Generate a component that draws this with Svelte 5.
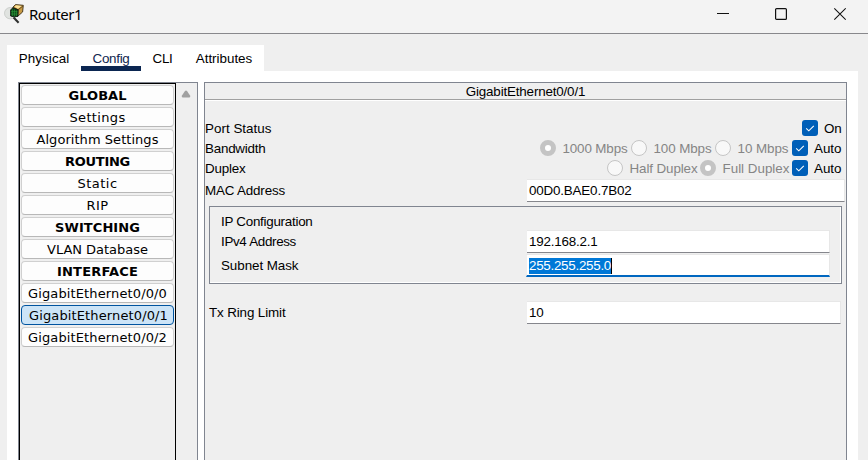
<script>
  const tabs = [
    { name: 'Physical', width: 74, text: 50.5 },
    { name: 'Config', width: 60, text: 37 },
    { name: 'CLI', width: 43, text: 20 },
    { name: 'Attributes', width: 80, text: 56.5 },
  ];
  const items = [
    { name: 'GLOBAL', text: 58, heading: true },
    { name: 'Settings', text: 56 },
    { name: 'Algorithm Settings', text: 122 },
    { name: 'ROUTING', text: 65, heading: true },
    { name: 'Static', text: 40 },
    { name: 'RIP', text: 22 },
    { name: 'SWITCHING', text: 85, heading: true },
    { name: 'VLAN Database', text: 101 },
    { name: 'INTERFACE', text: 81, heading: true },
    { name: 'GigabitEthernet0/0/0', text: 139 },
    { name: 'GigabitEthernet0/0/1', text: 139, selected: true },
    { name: 'GigabitEthernet0/0/2', text: 139 },
  ];
  const bandwidth = [
    { name: '1000 Mbps', text: 65, width: 75, on: true },
    { name: '100 Mbps', text: 58, width: 68 },
    { name: '10 Mbps', text: 51, width: 61 },
  ];
  const duplex = [
    { name: 'Half Duplex', text: 68, width: 77 },
    { name: 'Full Duplex', text: 67, width: 76, on: true },
  ];

  // Spreads the letters of a label so that it occupies the given width.
  function fit(node, width) {
    const range = document.createRange();
    range.selectNodeContents(node);
    const natural = range.getBoundingClientRect().width;
    node.style.letterSpacing = (width - natural) / node.textContent.length + 'px';
  }
</script>

{#snippet check()}
  <svg class="check" width="16" height="16" viewBox="0 0 16 16">
    <rect width="16" height="16" rx="3" fill="#005fb8" />
    <path d="M4.2 8.3 6.8 10.8 11.8 5.8" fill="none" stroke="#fff" stroke-width="1.1" />
  </svg>
{/snippet}

{#snippet radio(option)}
  <span class="radio" class:on={option.on}></span>
  <span class="choice" style:width="{option.width}px"><span use:fit={option.text}>{option.name}</span></span>
{/snippet}

<div class="window">
  <header>
    <svg class="logo" width="22" height="22" viewBox="0 0 22 22">
      <path d="M8.5 3.5 11.5 0.6 19.3 1.3 18.6 8 13.5 12.5Z" fill="#c99a42" stroke="#3c3018" stroke-width="0.9" />
      <path d="M10.4 2.7 12.2 1.3 17.8 1.9 14 4.8Z" fill="#fbe29a" />
      <path d="M9 3.2 14 5.8 19 2" fill="none" stroke="#5c431a" stroke-width="0.9" />
      <circle cx="6.2" cy="9.2" r="5.7" fill="#e0e3e0" stroke="#c0c3c0" stroke-width="0.7" />
      <path d="M6.6 6 8.8 3.8 14.2 5.8 14 12.2 10.5 13 6.6 12Z" fill="#0a3f14" stroke="#111b12" stroke-width="0.9" />
      <path d="M8.4 5.5v6.5M10.4 5.5v7M12.4 6.5v5.5M7 7.7h6.5M7 10h6.5" stroke="#2a9a39" stroke-width="0.7" />
      <path d="M9.6 13.6 14.6 18.8" stroke="#2e302e" stroke-width="2.1" />
    </svg>
    <h1><span use:fit={53}>Router1</span></h1>
    <div class="controls">
      <svg width="13" height="14" viewBox="0 0 13 14"><path d="M0 6.5H12" stroke="#111" /></svg>
      <svg width="13" height="14" viewBox="0 0 13 14"><rect x="0.6" y="1.6" width="10.8" height="10.8" rx="1" fill="none" stroke="#111" stroke-width="1.2" /></svg>
      <svg width="13" height="14" viewBox="0 0 13 14"><path d="M1.3 1.3 12.7 12.7M12.7 1.3 1.3 12.7" stroke="#111" stroke-width="1.1" /></svg>
    </div>
  </header>

  <nav>
    {#each tabs as tab}
      <div class="tab" class:active={tab.name === 'Config'} style:width="{tab.width}px"><span use:fit={tab.text}>{tab.name}</span></div>
    {/each}
  </nav>

  <main>
    <aside>
      <div class="list">
        {#each items as item}
          <button class:heading={item.heading} class:selected={item.selected}><span use:fit={item.text}>{item.name}</span></button>
        {/each}
      </div>
      <div class="scrollbar">
        <svg width="10" height="8" viewBox="0 0 10 8"><path d="M4 1Q5 0 6 1L9.2 5.8Q9.6 7.5 8.3 7.5H1.7Q0.4 7.5 0.8 5.8Z" fill="#a0a0a0" /></svg>
      </div>
    </aside>

    <section>
      <h2><span use:fit={119.5}>GigabitEthernet0/0/1</span></h2>
      <div class="row">
        <span class="label"><span use:fit={66.5}>Port Status</span></span>
        {@render check()}<span class="auto on-label"><span use:fit={17.5}>On</span></span>
      </div>
      <div class="row">
        <span class="label"><span use:fit={60.5}>Bandwidth</span></span>
        {#each bandwidth as option}{@render radio(option)}{/each}
        {@render check()}<span class="auto"><span use:fit={27.5}>Auto</span></span>
      </div>
      <div class="row">
        <span class="label"><span use:fit={40.5}>Duplex</span></span>
        {#each duplex as option}{@render radio(option)}{/each}
        {@render check()}<span class="auto"><span use:fit={27.5}>Auto</span></span>
      </div>
      <div class="field mac">
        <span class="label"><span use:fit={80}>MAC Address</span></span>
        <div class="input"><span use:fit={102.5}>00D0.BAE0.7B02</span></div>
      </div>
      <div class="group">
        <div class="legend"><span use:fit={91.5}>IP Configuration</span></div>
        <div class="field">
          <span class="label"><span use:fit={75}>IPv4 Address</span></span>
          <div class="input"><span use:fit={68.5}>192.168.2.1</span></div>
        </div>
        <div class="field subnet">
          <span class="label"><span use:fit={77.5}>Subnet Mask</span></span>
          <div class="input focused"><span class="selection"><span use:fit={82}>255.255.255.0</span></span></div>
        </div>
      </div>
      <div class="field ring">
        <span class="label"><span use:fit={76.5}>Tx Ring Limit</span></span>
        <div class="input"><span use:fit={14.5}>10</span></div>
      </div>
    </section>
  </main>
</div>

<style>
  :global(body) { margin: 0; overflow: hidden; }
  .window, .window * { box-sizing: border-box; }
  .window {
    width: 868px; height: 460px; overflow: hidden;
    display: flex; flex-direction: column;
    background: #efefef; color: #000;
    font: 13.4px/16px "Liberation Sans", Arial, sans-serif;
    white-space: nowrap;
  }
  header {
    display: flex; flex: none; height: 34px; padding-left: 4px;
    background: #f3f3f3; border-bottom: 1px solid #88888c;
  }
  .logo { margin-top: 4px; }
  h1 { margin: 4px 0 0 3px; font: 15px/20px "Noto Sans", "Open Sans", sans-serif; }
  .controls { display: flex; gap: 45px; margin: 7px 22px 0 auto; }
  nav { display: flex; flex: none; width: 257px; height: 26px; margin: 11px 0 0 7px; background: #fff; }
  .tab { height: 26px; padding-top: 6px; text-align: center; }
  .tab.active { color: #10264f; border-bottom: 5px solid #0b2651; }
  main {
    display: flex; gap: 6px; flex: 1; width: 851px;
    margin-left: 7px; padding: 11px 11px 0; background: #fff;
  }
  aside { display: flex; width: 180px; background: #efefef; border: 1px solid #808590; border-bottom: 0; }
  .list {
    display: flex; flex-direction: column; gap: 2px; width: 157px;
    padding: 1px; border: 1px solid #000; border-bottom: 0;
  }
  button {
    display: block; flex: none; width: 153px; height: 20px; padding: 1px 0 0; text-align: center;
    color: #000; background: #fdfdfd; border: 1px solid #d0d0d0; border-bottom-color: #b8b8b8; border-radius: 4px;
    font: 13px/17px "DejaVu Sans", Verdana, sans-serif;
  }
  .heading { font-weight: bold; }
  .selected { background: #cce4f7; border-color: #0054a0; padding: 2px 0 0 2px; line-height: 16px; }
  .scrollbar { flex: 1; padding: 7px 0 0 5px; }
  .scrollbar svg { display: block; }
  section { width: 643px; background: #efefef; border: 1px solid #808590; border-bottom: 0; }
  h2 {
    height: 17px; margin: 0 0 18px; text-align: center; font: inherit; line-height: 17px;
    border-bottom: 1px solid #a0a0a0; box-shadow: 0 1px #fff;
  }
  .row { display: flex; align-items: center; height: 20px; padding-right: 5px; }
  .row .label, .choice, .auto { padding-top: 2px; }
  .label { margin-right: auto; }
  .check { flex: none; }
  .auto { width: 33px; padding-left: 6px; }
  .on-label { width: 23px; }
  .radio { flex: none; width: 16px; height: 16px; background: #f8f8f8; border: 1px solid #c5c5c5; border-radius: 50%; }
  .radio.on { background: #fff; border: 5px solid #c4c4c4; }
  .choice { flex: none; padding-left: 6.5px; color: #858585; }
  .field { display: flex; align-items: center; height: 23px; }
  .input {
    width: 318px; height: 23px; padding: 3px 0 0 2px; background: #fff;
    border: solid #e7e7e7; border-width: 1px 1px 1px 0; border-bottom-color: #85868c;
  }
  .mac { margin-top: 1px; padding-right: 1px; }
  .group {
    height: 78px; margin: 4px 4px 0; padding: 7px 11px 0;
    border: 1px solid #808590; box-shadow: inset -1px -1px #fff;
  }
  .legend { height: 16px; }
  .group .field { width: 609px; }
  .group .input { width: 303px; }
  .group .subnet { margin-top: 1px; }
  .group .focused { width: 304px; border-bottom: 2px solid #0067c0; border-left: 1px solid #efefef; }
  .selection { display: inline-block; height: 16px; width: 83px; color: #fff; background: #0078d7; border-right: 1px solid #000; }
  .ring { margin-top: 17px; padding: 0 5px 0 4px; }
  .ring .input { width: 314px; }
</style>
